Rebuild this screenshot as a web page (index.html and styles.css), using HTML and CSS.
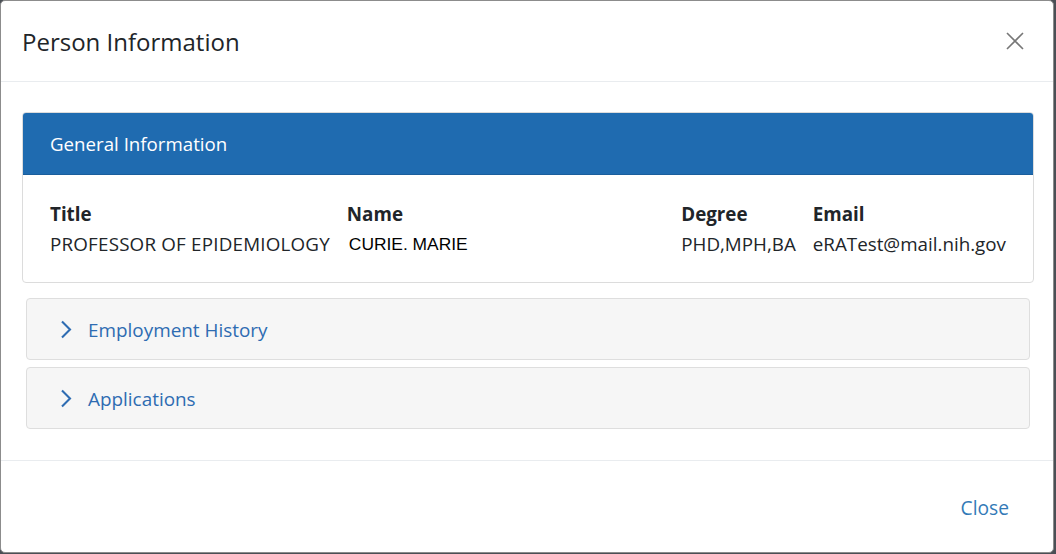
FILE: index.html
```html
<!DOCTYPE html>
<html>
<head>
<meta charset="utf-8">
<link rel="stylesheet" href="styles.css">
</head>
<body>
<div class="modal">
  <div class="modal-header">
    <h4 class="modal-title">Person Information</h4>
    <button class="close-x" aria-label="Close">
      <svg width="18" height="18" viewBox="0 0 18 18"><path d="M1 1 L17 17 M17 1 L1 17" stroke="#777" stroke-width="1.6" fill="none"/></svg>
    </button>
  </div>
  <div class="modal-body">
    <div class="card">
      <div class="card-header">General Information</div>
      <div class="card-body">
        <div class="info-grid">
          <div class="lbl">Title</div>
          <div class="lbl">Name</div>
          <div class="lbl">Degree</div>
          <div class="lbl">Email</div>
          <div class="val caps">PROFESSOR OF EPIDEMIOLOGY</div>
          <div class="val name">CURIE. MARIE</div>
          <div class="val">PHD,MPH,BA</div>
          <div class="val">eRATest@mail.nih.gov</div>
        </div>
      </div>
    </div>
    <div class="acc">
      <svg class="chev" width="13" height="19" viewBox="0 0 13 19"><path d="M2 1.5 L10 9.5 L2 17.5" stroke="#2e6cb2" stroke-width="2.1" fill="none"/></svg>
      <span class="acc-title">Employment History</span>
    </div>
    <div class="acc">
      <svg class="chev" width="13" height="19" viewBox="0 0 13 19"><path d="M2 1.5 L10 9.5 L2 17.5" stroke="#2e6cb2" stroke-width="2.1" fill="none"/></svg>
      <span class="acc-title">Applications</span>
    </div>
  </div>
  <div class="modal-footer">
    <a class="close-link" href="#">Close</a>
  </div>
</div>
</body>
</html>
```

FILE: styles.css
```css
html, body {
  margin: 0;
  padding: 0;
}
body {
  background: #4a4f55;
  width: 1056px;
  height: 554px;
  overflow: hidden;
  font-family: "Open Sans", "Noto Sans", sans-serif;
  color: #212529;
}
.modal {
  width: 1052px;
  height: 551px;
  background: #fff;
  border: 1px solid #8c8c8c;
  border-radius: 5px;
  display: flex;
  flex-direction: column;
}
.modal-header {
  height: 80px;
  border-bottom: 1px solid #e9ecef;
  display: flex;
  align-items: center;
  justify-content: space-between;
  padding: 0 29px 0 21px;
}
.modal-title {
  margin: 0;
  font-size: 24px;
  font-weight: 400;
  color: #212529;
  line-height: 1;
  padding-top: 2px;
}
.close-x {
  border: 0;
  background: none;
  padding: 0;
  width: 18px;
  height: 18px;
  display: flex;
  cursor: pointer;
}
.modal-body {
  flex: 1;
  padding: 30px 19px 0 21px;
  display: flex;
  flex-direction: column;
}
.card {
  border: 1px solid #dcdcdc;
  border-radius: 4px;
  overflow: hidden;
  margin-bottom: 15px;
}
.card-header {
  background: #1f6bb0;
  color: #fff;
  height: 61px;
  display: flex;
  align-items: center;
  padding: 0 27px;
  font-size: 18.7px;
  border-bottom: 1px solid #1a5e9c;
}
.card-body {
  padding: 24px 27px 0 27px;
  height: 83px;
}
.info-grid {
  display: grid;
  grid-template-columns: auto 1fr auto auto;
  column-gap: 17px;
  row-gap: 0;
  font-size: 18.8px;
}
.lbl {
  font-weight: 700;
  line-height: 30px;
}
.val {
  line-height: 30px;
  white-space: nowrap;
}
.val.caps {
  letter-spacing: 0.2px;
}
.val.name {
  font-family: "Liberation Sans", Arial, sans-serif;
  font-size: 17.4px;
  color: #000;
  padding-left: 2px;
}
.acc {
  margin: 0 4px 7px 4px;
  height: 60px;
  background: #f6f6f6;
  border: 1px solid #dedede;
  border-radius: 4px;
  display: flex;
  align-items: center;
  padding-left: 33px;
}
.chev {
  margin-right: 15px;
}
.acc-title {
  color: #2e6cb2;
  font-size: 18.9px;
  padding-top: 2px;
}
.modal-footer {
  height: 91px;
  border-top: 1px solid #e9ecef;
  display: flex;
  align-items: center;
  justify-content: flex-end;
  padding-right: 44px;
}
.close-link {
  color: #337ab7;
  text-decoration: none;
  font-size: 19.2px;
  padding-top: 2px;
}
```
